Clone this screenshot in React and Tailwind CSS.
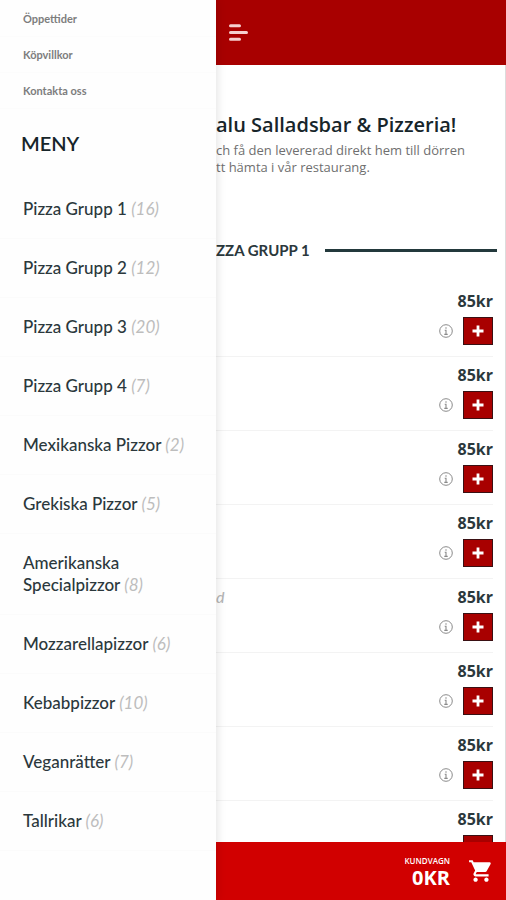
import { MdShoppingCart } from 'react-icons/md';

const infoLinks = ['Öppettider', 'Köpvillkor', 'Kontakta oss'];

const categories = [
  { name: 'Pizza Grupp 1', count: 16 },
  { name: 'Pizza Grupp 2', count: 12 },
  { name: 'Pizza Grupp 3', count: 20 },
  { name: 'Pizza Grupp 4', count: 7 },
  { name: 'Mexikanska Pizzor', count: 2 },
  { name: 'Grekiska Pizzor', count: 5 },
  { name: 'Amerikanska Specialpizzor', count: 8 },
  { name: 'Mozzarellapizzor', count: 6 },
  { name: 'Kebabpizzor', count: 10 },
  { name: 'Veganrätter', count: 7 },
  { name: 'Tallrikar', count: 6 },
];

const pizzas = [
  { id: 1, price: 85 },
  { id: 2, price: 85 },
  { id: 3, price: 85 },
  { id: 4, price: 85 },
  { id: 5, price: 85, note: 'd' },
  { id: 6, price: 85 },
  { id: 7, price: 85 },
  { id: 8, price: 85 },
];

function Drawer() {
  return (
    <aside className="relative z-10 w-[216px] shrink-0 overflow-hidden bg-[#fefefe] shadow-[0_0_10px_rgba(0,0,0,0.14)]">
      <ul className="pt-px">
        {infoLinks.map((label) => (
          <li key={label} className="h-9 border-b border-[#fcfcfc] px-[23px] text-[11px] leading-9 font-bold text-[#7d7d7d]">
            <a href="#info">{label}</a>
          </li>
        ))}
      </ul>
      <h2 className="mt-5 px-[21px] text-xl leading-7 font-semibold text-[#17252a]">MENY</h2>
      <ul className="mt-[23px]">
        {categories.map((cat) => (
          <li key={cat.name} className="border-b border-[#fbfbfb] px-[23px] py-[18px] text-[17px] leading-[22px] font-medium text-[#2b383c]">
            <a href="#meny">
              {cat.name} <em className="font-normal text-[#bdbdbd]">({cat.count})</em>
            </a>
          </li>
        ))}
      </ul>
    </aside>
  );
}

function PizzaRow({ pizza }) {
  return (
    <li className="flex h-[74px] justify-between border-b border-[#f3f3f3] pt-2">
      <em className="text-base leading-5 font-medium text-[#b5b5b5]">{pizza.note}</em>
      <div className="flex flex-col items-end gap-1.5">
        <span className="font-['Open_Sans',sans-serif] text-base leading-5 font-bold text-[#2b383c]">{pizza.price}kr</span>
        <div className="flex items-center gap-2.5">
          <button type="button" aria-label="Information">
            <svg className="size-[14px]" viewBox="0 0 14 14" fill="none" stroke="#8a8a8a">
              <circle cx="7" cy="7" r="6.3" />
              <path d="M7 3.2v1.5M5.7 6.3H7v4M5.3 10.4h3.4" strokeWidth="1.1" />
            </svg>
          </button>
          <button type="button" aria-label="Lägg till" className="flex h-7 w-[30px] items-center justify-center border border-[#3a1013] bg-[#a80000]">
            <svg className="size-3" viewBox="0 0 12 12" stroke="#fff" strokeWidth="2.8">
              <path d="M6 0.5v11M0.5 6h11" />
            </svg>
          </button>
        </div>
      </div>
    </li>
  );
}

export default function App() {
  return (
    <div className="flex h-screen overflow-hidden bg-white font-['Lato',sans-serif]">
      <Drawer />

      <div className="flex min-w-0 flex-1 flex-col">
        <header className="flex h-[65px] shrink-0 items-center bg-[#a80000] px-3">
          <button type="button" aria-label="Meny">
            <svg className="h-[17px] w-5" viewBox="0 0 20 17" stroke="#f6d0d0" strokeWidth="3" strokeLinecap="round">
              <path d="M2.5 1.8h9M2.5 8.5h16M2.5 15.2h9" />
            </svg>
          </button>
        </header>

        <main className="min-h-0 flex-1 overflow-hidden border-r border-[#dcdcdc]">
          <section className="pt-[46px] font-['Open_Sans',sans-serif] whitespace-nowrap">
            <h1 className="text-xl leading-7 font-semibold text-[#17252a]">alu Salladsbar &amp; Pizzeria!</h1>
            <p className="mt-[3px] text-[13px] leading-[17px] text-[#6f6f6f]">
              ch få den levererad direkt hem till dörren
              <br />
              tt hämta i vår restaurang.
            </p>
          </section>

          <h2 className="mt-16 flex items-center gap-[15px] pr-2 text-[15px] leading-5 font-bold text-[#2b383c]">
            ZZA GRUPP 1
            <span className="h-[3px] flex-1 bg-[#23393c]" />
          </h2>

          <ul className="mt-[23px] pr-3">
            {pizzas.map((pizza) => (
              <PizzaRow key={pizza.id} pizza={pizza} />
            ))}
          </ul>
        </main>

        <footer className="shrink-0 bg-[#d10000] text-white">
          <button type="button" className="flex h-[58px] w-full items-center justify-end gap-[18px] pr-3">
            <span className="flex flex-col items-end pt-0.5 font-bold">
              <span className="font-['Open_Sans',sans-serif] text-[8px] leading-[11px] font-semibold">KUNDVAGN</span>
              <span className="font-['Open_Sans',sans-serif] text-xl leading-6">0KR</span>
            </span>
            <MdShoppingCart className="size-[26px]" />
          </button>
        </footer>
      </div>
    </div>
  );
}
